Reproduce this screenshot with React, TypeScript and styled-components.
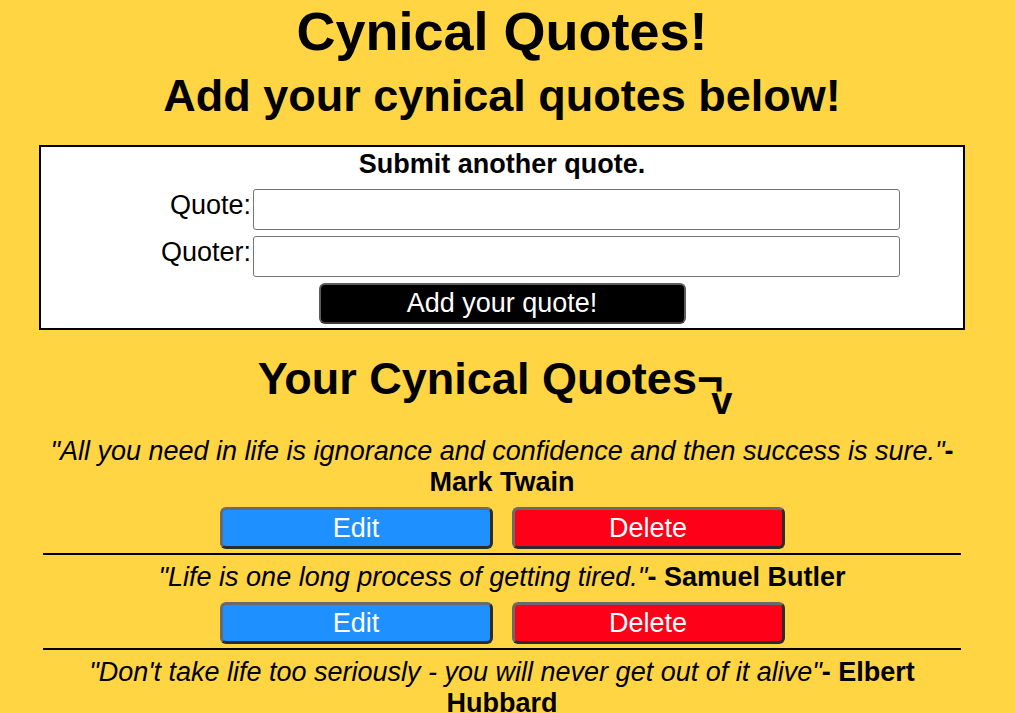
import React from "react";
import styled, { createGlobalStyle } from "styled-components";

const GlobalStyle = createGlobalStyle`
  html, body {
    margin: 0;
    padding: 0;
    background: #ffd544;
  }
  body {
    font-family: "Liberation Sans", Arial, Helvetica, sans-serif;
    color: #000;
  }
`;

const Page = styled.div`
  padding: 0 11px 0 0;
  display: flex;
  flex-direction: column;
  align-items: center;
  font-size: 27px;
  line-height: 31px;
`;

const Title = styled.h1`
  margin: 0;
  font-size: 54px;
  line-height: 62px;
  font-weight: bold;
  text-align: center;
`;

const Heading = styled.h2<{ $top: number }>`
  margin: ${(p) => p.$top}px 0 0;
  font-size: 45px;
  line-height: 51px;
  font-weight: bold;
  text-align: center;
  white-space: nowrap;
`;

const Smirk = styled.span`
  position: relative;
  top: 20px;
  font-size: 38px;
  line-height: 0;
  margin-left: -12px;
  margin-right: 14px;
`;

const FormBox = styled.form`
  box-sizing: border-box;
  width: 926px;
  margin-top: 24px;
  background: #fff;
  border: 2px solid #000;
  padding: 2px 0 4px;
  display: flex;
  flex-direction: column;
  gap: 6px;
`;

const FormTitle = styled.div`
  font-weight: bold;
  text-align: center;
  margin-bottom: 3px;
`;

const Field = styled.div`
  display: grid;
  grid-template-columns: 210px 647px;
  column-gap: 2px;
  align-items: start;
`;

const Label = styled.label`
  text-align: right;
  padding-top: 1px;
`;

const Input = styled.input`
  box-sizing: border-box;
  height: 41px;
  width: 100%;
  margin: 0;
  border: 1px solid #767676;
  border-radius: 3px;
  background: #fff;
  font: inherit;
`;

const SubmitButton = styled.button`
  box-sizing: border-box;
  align-self: center;
  width: 367px;
  height: 41px;
  margin: 0;
  padding: 0;
  background: #000;
  color: #fff;
  border: 2px solid #5c5c5c;
  border-bottom-color: #3a3a3a;
  border-radius: 6px;
  font-family: inherit;
  font-size: 27px;
`;

const List = styled.ul`
  list-style: none;
  margin: 25px 0 0;
  padding: 0;
  width: 918px;
`;

const Item = styled.li`
  padding: 7px 0 4px;
  border-bottom: 2px solid #000;
  display: flex;
  flex-direction: column;
  align-items: center;
  gap: 9px;
`;

const QuoteText = styled.p`
  margin: 0;
  text-align: center;
`;

const Said = styled.i`
  font-style: italic;
`;

const Author = styled.b`
  font-weight: bold;
`;

const Actions = styled.div`
  display: flex;
  gap: 19px;
`;

const ActionButton = styled.button<{ $color: string }>`
  box-sizing: border-box;
  width: 273px;
  height: 42px;
  margin: 0;
  padding: 0;
  background: ${(p) => p.$color};
  color: #fff;
  border: 3px solid;
  border-color: #6a6a6a #2c2c2c #2c2c2c #6a6a6a;
  border-radius: 6px;
  font-family: inherit;
  font-size: 27px;
`;

const quotes = [
  {
    text: "All you need in life is ignorance and confidence and then success is sure.",
    author: "Mark Twain",
  },
  { text: "Life is one long process of getting tired.", author: "Samuel Butler" },
  {
    text: "Don't take life too seriously - you will never get out of it alive",
    author: "Elbert Hubbard",
  },
];

export default function App() {
  return (
    <>
      <GlobalStyle />
      <Page>
        <Title>Cynical Quotes!</Title>
        <Heading $top={8}>Add your cynical quotes below!</Heading>
        <FormBox onSubmit={(e) => e.preventDefault()}>
          <FormTitle>Submit another quote.</FormTitle>
          <Field>
            <Label htmlFor="quote">Quote:</Label>
            <Input id="quote" type="text" />
          </Field>
          <Field>
            <Label htmlFor="quoter">Quoter:</Label>
            <Input id="quoter" type="text" />
          </Field>
          <SubmitButton type="submit">Add your quote!</SubmitButton>
        </FormBox>
        <Heading $top={23}>
          Your Cynical Quotes¬<Smirk>v</Smirk>
        </Heading>
        <List>
          {quotes.map((q) => (
            <Item key={q.author}>
              <QuoteText>
                <Said>"{q.text}"</Said>
                <Author>- {q.author}</Author>
              </QuoteText>
              <Actions>
                <ActionButton $color="#1e90ff">Edit</ActionButton>
                <ActionButton $color="#ff0019">Delete</ActionButton>
              </Actions>
            </Item>
          ))}
        </List>
      </Page>
    </>
  );
}
